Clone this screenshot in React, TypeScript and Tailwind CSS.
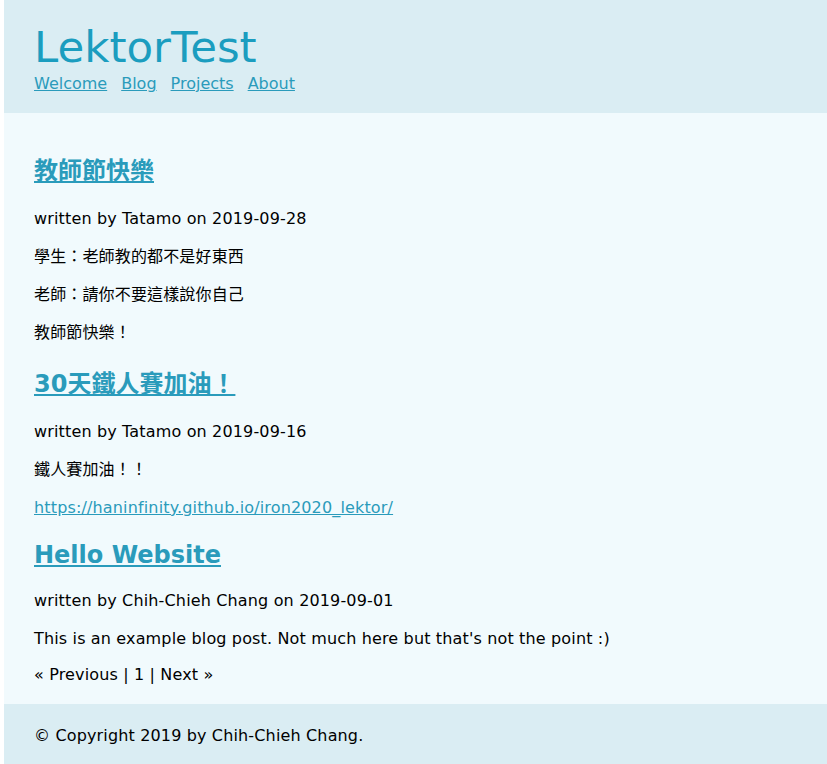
const posts = [
  {
    title: "教師節快樂",
    author: "Tatamo",
    date: "2019-09-28",
    body: ["學生：老師教的都不是好東西", "老師：請你不要這樣說你自己", "教師節快樂！"],
    top: "mt-0 mb-[22px]",
  },
  {
    title: "30天鐵人賽加油！",
    author: "Tatamo",
    date: "2019-09-16",
    body: ["鐵人賽加油！！"],
    link: "https://haninfinity.github.io/iron2020_lektor/",
    top: "mt-[26px] mb-[22px]",
  },
  {
    title: "Hello Website",
    author: "Chih-Chieh Chang",
    date: "2019-09-01",
    body: ["This is an example blog post. Not much here but that's not the point :)"],
    top: "mt-[22px] mb-[20px]",
  },
];

export default function App() {
  return (
    <div className="min-h-screen bg-white pl-1 font-['Verdana','DejaVu_Sans','Noto_Sans_CJK_TC',sans-serif] text-[16px] text-black">
      <header className="bg-[#daedf3] px-[30px] pt-[22px] h-[113px]">
        <h1 className="text-[43.5px] leading-[50px] text-[#1b9dbf]">LektorTest</h1>
        <nav className="flex gap-[14px] mt-[1px] text-[#2a9bbb] leading-[22px]">
          <a href="#" className="underline">Welcome</a>
          <a href="#" className="underline">Blog</a>
          <a href="#" className="underline">Projects</a>
          <a href="#" className="underline">About</a>
        </nav>
      </header>

      <main className="bg-[#f1fafd] px-[30px] pt-[43px] pb-[19px] tracking-[0.15px]">
        {posts.map((post) => (
          <div key={post.title}>
            <h2 className={`text-[24px] font-bold leading-[30px] tracking-normal ${post.top}`}>
              <a href="#" className="text-[#2a9bbb] underline">{post.title}</a>
            </h2>
            <p className="leading-[21px] mb-[17px]">
              written by {post.author} on {post.date}
            </p>
            {post.body.map((line) => (
              <p key={line} className="leading-[21px] mb-[17px]">{line}</p>
            ))}
            {post.link && (
              <p className="leading-[21px] mb-[17px]">
                <a href="#" className="text-[#2a9bbb] underline">{post.link}</a>
              </p>
            )}
          </div>
        ))}
        <p className="leading-[21px] -mt-[2px]">« Previous | 1 | Next »</p>
      </main>

      <footer className="bg-[#daedf3] px-[30px] pt-[21px] h-[60px] leading-[21px] tracking-[0.15px]">
        © Copyright 2019 by Chih-Chieh Chang.
      </footer>
    </div>
  );
}
